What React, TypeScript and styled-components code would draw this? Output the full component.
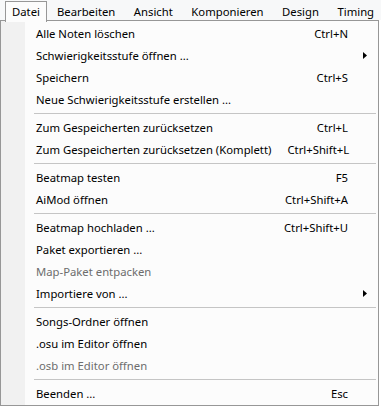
import React from "react";
import styled, { createGlobalStyle } from "styled-components";

const GlobalStyle = createGlobalStyle`
  html, body {
    margin: 0;
    padding: 0;
    background: #ffffff;
  }
  body {
    font-family: "Noto Sans", "Open Sans", sans-serif;
    font-size: 11.3px;
    color: #000;
  }
`;

type Entry =
  | { kind: "item"; label: string; shortcut?: string; submenu?: boolean; disabled?: boolean }
  | { kind: "sep" };

const entries: Entry[] = [
  { kind: "item", label: "Alle Noten löschen", shortcut: "Ctrl+N" },
  { kind: "item", label: "Schwierigkeitsstufe öffnen ...", submenu: true },
  { kind: "item", label: "Speichern", shortcut: "Ctrl+S" },
  { kind: "item", label: "Neue Schwierigkeitsstufe erstellen ..." },
  { kind: "sep" },
  { kind: "item", label: "Zum Gespeicherten zurücksetzen", shortcut: "Ctrl+L" },
  { kind: "item", label: "Zum Gespeicherten zurücksetzen (Komplett)", shortcut: "Ctrl+Shift+L" },
  { kind: "sep" },
  { kind: "item", label: "Beatmap testen", shortcut: "F5" },
  { kind: "item", label: "AiMod öffnen", shortcut: "Ctrl+Shift+A" },
  { kind: "sep" },
  { kind: "item", label: "Beatmap hochladen ...", shortcut: "Ctrl+Shift+U" },
  { kind: "item", label: "Paket exportieren ..." },
  { kind: "item", label: "Map-Paket entpacken", disabled: true },
  { kind: "item", label: "Importiere von ...", submenu: true },
  { kind: "sep" },
  { kind: "item", label: "Songs-Ordner öffnen" },
  { kind: "item", label: ".osu im Editor öffnen" },
  { kind: "item", label: ".osb im Editor öffnen", disabled: true },
  { kind: "sep" },
  { kind: "item", label: "Beenden ...", shortcut: "Esc" },
];

const menus = ["Datei", "Bearbeiten", "Ansicht", "Komponieren", "Design", "Timing"];

const Page = styled.div`
  width: 381px;
  height: 407px;
  overflow: hidden;
`;

const MenuBar = styled.div`
  display: flex;
  height: 20px;
  padding-left: 5px;
  background: #f7f8f9;
  position: relative;
  z-index: 2;
  white-space: nowrap;
`;

const MenuTitle = styled.div<{ $open?: boolean }>`
  display: flex;
  align-items: center;
  justify-content: center;
  box-sizing: border-box;
  height: ${(p) => (p.$open ? "21px" : "20px")};
  margin-top: 1px;
  padding: 0 ${(p) => (p.$open ? "6px" : "9px")};
  border: 1px solid ${(p) => (p.$open ? "#979797" : "transparent")};
  border-bottom: none;
  background: ${(p) => (p.$open ? "#fcfcfc" : "transparent")};
  line-height: 18px;
  margin-right: ${(p) => (p.$open ? "0" : "-1.5px")};
`;

const Dropdown = styled.div`
  box-sizing: border-box;
  width: 379px;
  border: 1px solid #979797;
  padding: 1px 2px 1px 1px;
  background: linear-gradient(to right, #f1f1f1 0 24px, #fcfcfc 24px);
  position: relative;
  z-index: 1;
`;

const Row = styled.div<{ $disabled?: boolean }>`
  display: grid;
  grid-template-columns: 34px 1fr auto 28px;
  align-items: center;
  height: 22px;
  color: ${(p) => (p.$disabled ? "#6d6d6d" : "#000")};
  white-space: nowrap;
`;

const Label = styled.span`
  grid-column: 2;
`;

const Shortcut = styled.span`
  grid-column: 3;
  text-align: right;
  padding-left: 16px;
`;

const Arrow = styled.span`
  grid-column: 4;
  display: flex;
  justify-content: center;
  padding-left: 6px;
`;

const Separator = styled.div`
  height: 6px;
  display: flex;
  align-items: center;
  padding-left: 32px;
  &::after {
    content: "";
    flex: 1;
    height: 1px;
    background: #c5c5c5;
  }
`;

const SubArrow = () => (
  <svg width="4" height="7" viewBox="0 0 4 7">
    <path d="M0 0 L4 3.5 L0 7 Z" fill="#000" />
  </svg>
);

export default function App() {
  return (
    <Page>
      <GlobalStyle />
      <MenuBar>
        {menus.map((m, i) => (
          <MenuTitle key={m} $open={i === 0}>
            {m}
          </MenuTitle>
        ))}
      </MenuBar>
      <Dropdown>
        {entries.map((e, i) =>
          e.kind === "sep" ? (
            <Separator key={i} />
          ) : (
            <Row key={i} $disabled={e.disabled}>
              <Label>{e.label}</Label>
              {e.shortcut && <Shortcut>{e.shortcut}</Shortcut>}
              {e.submenu && (
                <Arrow>
                  <SubArrow />
                </Arrow>
              )}
            </Row>
          )
        )}
      </Dropdown>
    </Page>
  );
}
